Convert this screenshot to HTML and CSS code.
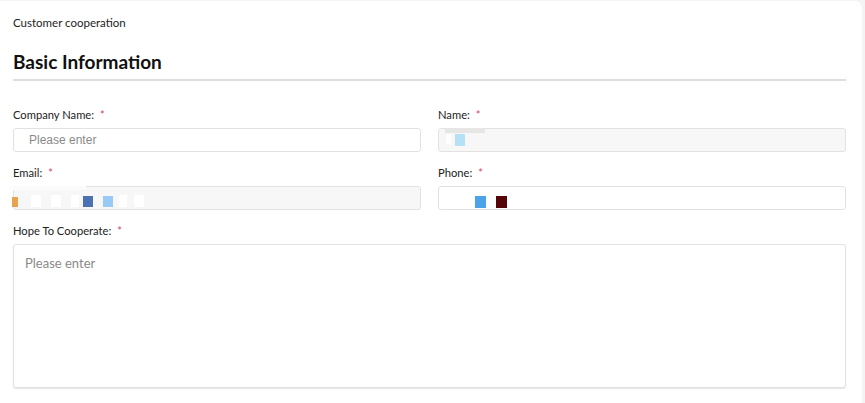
FILE: index.html
```html
<!DOCTYPE html>
<html>
<head>
<meta charset="utf-8">
<link rel="stylesheet" href="styles.css">
</head>
<body>
<div class="card">
  <div class="crumb">Customer cooperation</div>
  <h2 class="title">Basic Information</h2>
  <div class="divider"></div>
  <div class="grid">
    <div class="field">
      <label class="label">Company Name:<span class="req">*</span></label>
      <input class="input" type="text" placeholder="Please enter">
    </div>
    <div class="field">
      <label class="label">Name:<span class="req">*</span></label>
      <div class="input filled disabled">
        <span class="mask strip" style="left:6px;width:40px"></span>
        <span class="mask white" style="left:7px;top:5px;width:5px;height:10px"></span>
        <span class="mask sq" style="left:16px;top:5px;width:10px;height:12px;background:#b6e0f6"></span>
      </div>
    </div>
    <div class="field">
      <label class="label">Email:<span class="req">*</span></label>
      <div class="input filled disabled email">
        <span class="mask stripw" style="left:-3px;width:75px"></span>
        <span class="mask sq" style="left:-2px;top:10px;width:6px;height:10px;background:#e8a44c"></span>
        <span class="mask white" style="left:17px;top:8px;width:10px;height:12px"></span>
        <span class="mask white" style="left:37px;top:8px;width:10px;height:12px"></span>
        <span class="mask white" style="left:57px;top:8px;width:8px;height:12px"></span>
        <span class="mask sq" style="left:69px;top:9px;width:10px;height:11px;background:#4d72b3"></span>
        <span class="mask sq" style="left:89px;top:9px;width:10px;height:11px;background:#99c9f5"></span>
        <span class="mask white" style="left:105px;top:8px;width:8px;height:12px"></span>
        <span class="mask white" style="left:120px;top:8px;width:10px;height:12px"></span>
      </div>
    </div>
    <div class="field">
      <label class="label">Phone:<span class="req">*</span></label>
      <div class="input filled">
        <span class="mask sq" style="left:36px;top:9px;width:11px;height:12px;background:#4da3e8"></span>
        <span class="mask sq" style="left:57px;top:9px;width:11px;height:12px;background:#560608"></span>
      </div>
    </div>
    <div class="field wide">
      <label class="label">Hope To Cooperate:<span class="req">*</span></label>
      <textarea class="textarea" placeholder="Please enter"></textarea>
    </div>
  </div>
</div>
</body>
</html>
```
FILE: styles.css
```css
* { box-sizing: border-box; }
html, body { margin: 0; padding: 0; }
body {
  background: #f4f4f4;
  font-family: Lato, "Open Sans", sans-serif;
  color: #222;
  height: 403px;
  overflow: hidden;
}
.card {
  margin: 1px 3px 0 0;
  background: #fff;
  border-radius: 0 7px 0 0;
  padding: 14px 16px 40px 13px;
  min-height: 420px;
}
.crumb {
  font-size: 11.5px;
  line-height: 16px;
  color: #1d1d1d;
}
.title {
  margin: 19px 0 0;
  font-size: 19px;
  line-height: 23px;
  font-weight: 700;
  color: #111;
}
.divider {
  margin-top: 6px;
  height: 2px;
  background: #dedede;
}
.grid {
  display: grid;
  grid-template-columns: 1fr 1fr;
  column-gap: 17px;
  row-gap: 13px;
  margin-top: 26px;
}
.field { display: flex; flex-direction: column; }
.field.wide { grid-column: 1 / span 2; }
.label {
  font-size: 11.2px;
  line-height: 16px;
  color: #222;
  margin-bottom: 5px;
}
.req {
  color: #d9446b;
  margin-left: 6px;
}
.input {
  position: relative;
  height: 24px;
  border: 1px solid #e2e2e2;
  border-radius: 3px;
  background: #fff;
  font-family: "Liberation Sans", Arial, sans-serif;
  font-size: 12px;
  padding: 0 15px;
  outline: none;
  width: 100%;
}
.input::placeholder { color: #8a8a8a; }
.input.disabled { background: #f7f7f7; }
.mask { position: absolute; display: block; }
.strip { top: -1px; height: 5px; background: #e6e6e6; }
.stripw { top: -1px; height: 4px; background: #fbfbfb; }
.white { background: #fff; }
.textarea {
  height: 144px;
  border: 1px solid #e2e2e2;
  border-radius: 3px;
  box-shadow: 0 1px 1px #e6e6e6;
  padding: 10px 11px;
  font-family: Lato, "Open Sans", sans-serif;
  font-size: 13px;
  resize: none;
  outline: none;
  width: 100%;
}
.textarea::placeholder { color: #8a8a8a; }
```
